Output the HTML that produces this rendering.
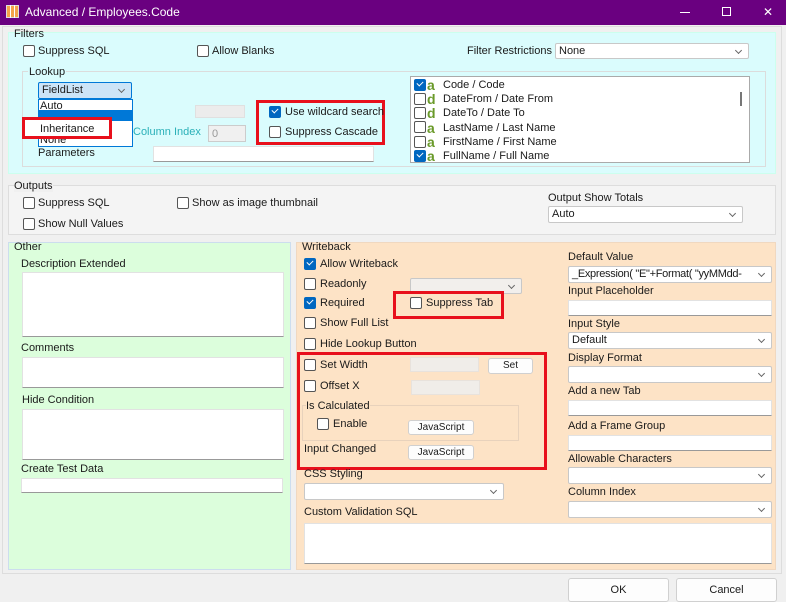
<!DOCTYPE html><html><head><style>
*{box-sizing:border-box}body{margin:0;width:786px;height:599px;background:#f0f0f0;font-family:"Liberation Sans",sans-serif;font-size:11px;color:#1a1a1a;position:relative;overflow:hidden}
.a{position:absolute}
.t{position:absolute;white-space:nowrap;line-height:12px}
.cb{position:absolute;width:12px;height:12px;border:1px solid #555;border-radius:2px;background:#fff}
.ck{position:absolute;width:12px;height:12px;border-radius:2px;background:#0067c0}
.ck:after{content:"";position:absolute;left:3px;top:2px;width:5px;height:3px;border-left:1.3px solid #fff;border-bottom:1.3px solid #fff;transform:rotate(-45deg)}
.in{position:absolute;background:#fff;border:1px solid #e2e2e2;border-bottom:1px solid #999}
.sel{position:absolute;background:#fff;border:1px solid #c8c8c8;border-radius:2px;padding-left:3px;line-height:14px}
.sel:after{content:"";position:absolute;right:7px;top:4px;width:4px;height:4px;border-right:1px solid #666;border-bottom:1px solid #666;transform:rotate(45deg)}
.red{position:absolute;border:3px solid #e8101c}
.btn{position:absolute;background:#fdfdfd;border:1px solid #d0d0d0;border-radius:3px;text-align:center;font-size:10px}
.gb{position:absolute;border:1px solid #dcdcdc}
.g{color:#6a9a2a;font-weight:bold;font-size:14px;line-height:14px}
</style></head><body>
<div class="a" style="left:0;top:0;width:786px;height:25px;background:#6a0080"></div>
<div class="a" style="left:6px;top:5px;width:13px;height:13px;background:#f4a24a;border:1px solid #ddd"></div>
<div class="a" style="left:10px;top:5px;width:1px;height:13px;background:#fff"></div><div class="a" style="left:14px;top:5px;width:1px;height:13px;background:#fff"></div>
<div class="t" style="left:25px;top:6px;color:#fff;font-size:12px">Advanced / Employees.Code</div>
<div class="a" style="left:680px;top:12px;width:10px;height:1px;background:#fff"></div>
<div class="a" style="left:722px;top:7px;width:9px;height:9px;border:1px solid #fff"></div>
<div class="t" style="left:763px;top:6px;color:#fff;font-size:12px">✕</div>
<div class="a" style="left:2px;top:26px;width:780px;height:548px;border:1px solid #ddd"></div>
<!-- Filters -->
<div class="a" style="left:8px;top:32px;width:768px;height:142px;background:#dafcfd;border:1px solid #cfe"></div>
<div class="t" style="left:14px;top:28px">Filters</div>
<div class="cb" style="left:23px;top:45px"></div><div class="t" style="left:38px;top:45px">Suppress SQL</div>
<div class="cb" style="left:197px;top:45px"></div><div class="t" style="left:212px;top:45px">Allow Blanks</div>
<div class="t" style="left:467px;top:45px">Filter Restrictions</div>
<div class="sel" style="left:555px;top:43px;width:194px;height:16px">None</div>
<div class="gb" style="left:22px;top:71px;width:744px;height:96px"></div>
<div class="t" style="left:28px;top:66px;background:#dafcfd;padding:0 1px">Lookup</div>
<div class="sel" style="left:38px;top:82px;width:94px;height:17px;background:#cce4f7;border-color:#0078d7">FieldList</div>
<div class="a" style="left:38px;top:99px;width:95px;height:48px;background:#fff;border:1px solid #0078d7"></div>
<div class="t" style="left:40px;top:100px">Auto</div>
<div class="a" style="left:39px;top:110px;width:93px;height:11px;background:#0078d7"></div>
<div class="t" style="left:40px;top:134px">None</div>
<div class="red" style="left:22px;top:117px;width:90px;height:22px;background:#fff"></div>
<div class="t" style="left:40px;top:123px">Inheritance</div>
<div class="a" style="left:195px;top:105px;width:50px;height:13px;background:#ececec;border:1px solid #e0e0e0"></div>
<div class="t" style="left:133px;top:126px;color:#2ab0b8">Column Index</div>
<div class="a" style="left:208px;top:125px;width:38px;height:17px;background:#f0f0f0;border:1px solid #ccc;color:#999;padding:2px 3px">0</div>
<div class="t" style="left:38px;top:147px">Parameters</div>
<div class="in" style="left:153px;top:146px;width:221px;height:16px"></div>
<div class="red" style="left:256px;top:100px;width:129px;height:45px"></div>
<div class="ck" style="left:269px;top:106px"></div><div class="t" style="left:285px;top:106px">Use wildcard search</div>
<div class="cb" style="left:269px;top:126px"></div><div class="t" style="left:285px;top:126px">Suppress Cascade</div>
<div class="a" style="left:410px;top:76px;width:340px;height:87px;background:#fff;border:1px solid #aaa"></div>
<div class="a" style="left:740px;top:92px;width:2px;height:14px;background:#777"></div>
<div class="ck" style="left:414px;top:79px"></div><div class="t g" style="left:427px;top:78px">a</div><div class="t" style="left:443px;top:79px">Code / Code</div>
<div class="cb" style="left:414px;top:93px"></div><div class="t g" style="left:427px;top:92px">d</div><div class="t" style="left:443px;top:93px">DateFrom / Date From</div>
<div class="cb" style="left:414px;top:107px"></div><div class="t g" style="left:427px;top:106px">d</div><div class="t" style="left:443px;top:107px">DateTo / Date To</div>
<div class="cb" style="left:414px;top:121px"></div><div class="t g" style="left:427px;top:121px">a</div><div class="t" style="left:443px;top:122px">LastName / Last Name</div>
<div class="cb" style="left:414px;top:136px"></div><div class="t g" style="left:427px;top:135px">a</div><div class="t" style="left:443px;top:136px">FirstName / First Name</div>
<div class="ck" style="left:414px;top:150px"></div><div class="t g" style="left:427px;top:149px">a</div><div class="t" style="left:443px;top:150px">FullName / Full Name</div>
<!-- Outputs -->
<div class="a" style="left:8px;top:185px;width:768px;height:50px;background:#f4f4f4;border:1px solid #ddd"></div>
<div class="t" style="left:14px;top:180px;background:#f0f0f0">Outputs</div>
<div class="cb" style="left:23px;top:197px"></div><div class="t" style="left:38px;top:197px">Suppress SQL</div>
<div class="cb" style="left:177px;top:197px"></div><div class="t" style="left:192px;top:197px">Show as image thumbnail</div>
<div class="cb" style="left:23px;top:218px"></div><div class="t" style="left:38px;top:218px">Show Null Values</div>
<div class="t" style="left:548px;top:192px">Output Show Totals</div>
<div class="sel" style="left:548px;top:206px;width:195px;height:17px">Auto</div>
<!-- Other -->
<div class="a" style="left:8px;top:242px;width:283px;height:328px;background:#dcfedc;border:1px solid #cde"></div>
<div class="t" style="left:14px;top:241px">Other</div>
<div class="t" style="left:21px;top:258px">Description Extended</div>
<div class="in" style="left:22px;top:272px;width:262px;height:65px"></div>
<div class="t" style="left:21px;top:342px">Comments</div>
<div class="in" style="left:22px;top:357px;width:262px;height:31px"></div>
<div class="t" style="left:22px;top:394px">Hide Condition</div>
<div class="in" style="left:22px;top:409px;width:262px;height:51px"></div>
<div class="t" style="left:21px;top:463px">Create Test Data</div>
<div class="in" style="left:21px;top:478px;width:262px;height:15px"></div>
<!-- Writeback -->
<div class="a" style="left:296px;top:242px;width:480px;height:328px;background:#fde3c6;border:1px solid #f0d8c0"></div>
<div class="t" style="left:302px;top:241px">Writeback</div>
<div class="ck" style="left:304px;top:258px"></div><div class="t" style="left:320px;top:258px">Allow Writeback</div>
<div class="cb" style="left:304px;top:278px"></div><div class="t" style="left:320px;top:278px">Readonly</div>
<div class="sel" style="left:410px;top:278px;width:112px;height:16px;background:#f2efec"></div>
<div class="ck" style="left:304px;top:297px"></div><div class="t" style="left:320px;top:297px">Required</div>
<div class="red" style="left:393px;top:291px;width:111px;height:28px"></div>
<div class="cb" style="left:410px;top:297px"></div><div class="t" style="left:426px;top:297px">Suppress Tab</div>
<div class="cb" style="left:304px;top:317px"></div><div class="t" style="left:320px;top:317px">Show Full List</div>
<div class="cb" style="left:304px;top:338px"></div><div class="t" style="left:320px;top:338px">Hide Lookup Button</div>
<div class="red" style="left:297px;top:352px;width:250px;height:118px"></div>
<div class="cb" style="left:304px;top:359px"></div><div class="t" style="left:320px;top:359px">Set Width</div>
<div class="a" style="left:410px;top:357px;width:69px;height:15px;background:#f0ede9;border:1px solid #e8e2dc"></div>
<div class="btn" style="left:488px;top:358px;width:45px;height:16px;line-height:14px">Set</div>
<div class="cb" style="left:304px;top:380px"></div><div class="t" style="left:320px;top:380px">Offset X</div>
<div class="a" style="left:411px;top:380px;width:69px;height:15px;background:#f0ede9;border:1px solid #e8e2dc"></div>
<div class="gb" style="left:302px;top:405px;width:217px;height:36px;border-color:#e8d2bc"></div>
<div class="t" style="left:306px;top:400px;background:#fde3c6">Is Calculated</div>
<div class="cb" style="left:317px;top:418px"></div><div class="t" style="left:333px;top:418px">Enable</div>
<div class="btn" style="left:408px;top:420px;width:66px;height:15px;line-height:13px">JavaScript</div>
<div class="t" style="left:304px;top:443px">Input Changed</div>
<div class="btn" style="left:408px;top:445px;width:66px;height:15px;line-height:13px">JavaScript</div>
<div class="t" style="left:304px;top:468px">CSS Styling</div>
<div class="sel" style="left:304px;top:483px;width:200px;height:17px"></div>
<div class="t" style="left:304px;top:506px">Custom Validation SQL</div>
<div class="in" style="left:304px;top:523px;width:468px;height:41px"></div>
<div class="t" style="left:568px;top:251px">Default Value</div>
<div class="sel" style="left:568px;top:266px;width:204px;height:17px;overflow:hidden;padding-right:16px;letter-spacing:-0.3px">_Expression( "E"+Format( "yyMMdd-HHmm</div>
<div class="t" style="left:568px;top:285px">Input Placeholder</div>
<div class="in" style="left:568px;top:300px;width:204px;height:16px"></div>
<div class="t" style="left:568px;top:318px">Input Style</div>
<div class="sel" style="left:568px;top:332px;width:204px;height:17px">Default</div>
<div class="t" style="left:568px;top:352px">Display Format</div>
<div class="sel" style="left:568px;top:366px;width:204px;height:17px"></div>
<div class="t" style="left:568px;top:385px">Add a new Tab</div>
<div class="in" style="left:568px;top:400px;width:204px;height:16px"></div>
<div class="t" style="left:568px;top:420px">Add a Frame Group</div>
<div class="in" style="left:568px;top:435px;width:204px;height:16px"></div>
<div class="t" style="left:568px;top:453px">Allowable Characters</div>
<div class="sel" style="left:568px;top:467px;width:204px;height:17px"></div>
<div class="t" style="left:568px;top:486px">Column Index</div>
<div class="sel" style="left:568px;top:501px;width:204px;height:17px"></div>
<div class="btn" style="left:568px;top:578px;width:101px;height:24px;line-height:22px;font-size:11px">OK</div>
<div class="btn" style="left:676px;top:578px;width:101px;height:24px;line-height:22px;font-size:11px">Cancel</div>
</body></html>
